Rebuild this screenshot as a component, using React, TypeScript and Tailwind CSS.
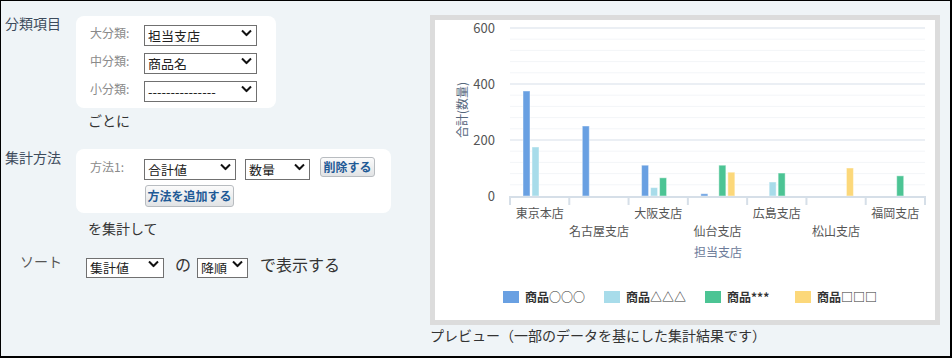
import React from 'react'

const font = "font-['Noto_Sans_CJK_JP','Noto_Sans',sans-serif]"

function Select({ value, width, height = 21 }: { value: string; width: number; height?: number }) {
  return (
    <div className="relative" style={{ width, height }}>
      <select
        defaultValue={value}
        className={`${font} h-full w-full appearance-none rounded-none border border-[#707070] bg-white pl-[3px] text-[13px] leading-none text-[#222] outline-none`}
      >
        <option>{value}</option>
      </select>
      <svg
        className="pointer-events-none absolute right-[5px] top-1/2 -translate-y-1/2"
        width="11"
        height="7"
        viewBox="0 0 11 7"
      >
        <path d="M1 1 L5.5 5.5 L10 1" fill="none" stroke="#111" strokeWidth="2" />
      </svg>
    </div>
  )
}

function Button({ label, width, height }: { label: string; width: number; height: number }) {
  return (
    <button
      className={`${font} flex items-center justify-center rounded-[3px] border border-[#b8bcc0] bg-gradient-to-b from-[#fbfbfb] to-[#e1e3e5] text-[12px] font-bold text-[#1f5a96]`}
      style={{ width, height }}
    >
      {label}
    </button>
  )
}

const cats = ['東京本店', '名古屋支店', '大阪支店', '仙台支店', '広島支店', '松山支店', '福岡支店']
const data = [
  [375, 175, 0, 0],
  [250, 0, 0, 0],
  [110, 30, 65, 0],
  [8, 0, 110, 85],
  [0, 50, 82, 0],
  [0, 0, 0, 100],
  [0, 0, 72, 0],
]
const colors = ['#69a0e2', '#a8dcea', '#4cc494', '#fcd87a']
const legend = ['商品○○○', '商品△△△', '商品***', '商品□□□']
const legendX = [68, 169, 270, 360]

function Chart() {
  const x0 = 75
  const x1 = 490
  const y0 = 176
  const step = (x1 - x0) / 7
  const yv = (v: number) => y0 - v * 0.28
  const grid: number[] = []
  for (let v = 40; v <= 600; v += 40) grid.push(v)

  return (
    <svg width="500" height="300" viewBox="0 0 500 300" className={font}>
      {grid.map((v) => (
        <line
          key={v}
          x1={x0}
          x2={x1}
          y1={yv(v)}
          y2={yv(v)}
          stroke={v % 200 === 0 ? '#e4eaf1' : '#f3f5f8'}
          strokeWidth={v % 200 === 0 ? 1.5 : 1}
        />
      ))}
      {[0, 200, 400, 600].map((v) => (
        <text key={v} x={60} y={yv(v) + 5} textAnchor="end" fontSize="13" fill="#555">
          {v}
        </text>
      ))}
      <text
        transform="translate(32 90) rotate(-90)"
        textAnchor="middle"
        fontSize="12"
        fill="#55667c"
      >
        合計(数量)
      </text>
      {data.map((vals, i) =>
        vals.map((v, j) =>
          v > 0 ? (
            <rect
              key={`${i}-${j}`}
              x={x0 + i * step + 13 + j * 9}
              y={yv(v)}
              width={7}
              height={v * 0.28}
              fill={colors[j]}
              stroke="rgba(255,255,255,0.45)"
              strokeWidth={1}
            />
          ) : null,
        ),
      )}
      <line x1={x0} x2={x1 + 1} y1={y0 + 1} y2={y0 + 1} stroke="#d6dfe8" strokeWidth="2" />
      {Array.from({ length: 8 }).map((_, i) => (
        <line
          key={i}
          x1={x0 + i * step}
          x2={x0 + i * step}
          y1={y0}
          y2={y0 + 9}
          stroke="#d6dfe8"
          strokeWidth="2"
        />
      ))}
      {cats.map((c, i) => (
        <text
          key={c}
          x={x0 + (i + 0.5) * step}
          y={i % 2 === 0 ? 198 : 216}
          textAnchor="middle"
          fontSize="12"
          fill="#555"
        >
          {c}
        </text>
      ))}
      <text x={283} y={237} textAnchor="middle" fontSize="12" fill="#6b7a99">
        担当支店
      </text>
      {legend.map((l, i) => (
        <g key={l}>
          <rect x={legendX[i]} y={271} width={16} height={12} fill={colors[i]} />
          <text x={legendX[i] + 22} y={282} fontSize="12" fontWeight="bold" fill="#333">
            {l}
          </text>
        </g>
      ))}
    </svg>
  )
}

export default function App() {
  return (
    <div
      className={`${font} flex h-[358px] w-[952px] border-t border-l border-r-2 border-b-2 border-black bg-[#eff4f7] text-[#333]`}
    >
      {/* left: settings */}
      <div className="w-[429px] pl-[4px] pt-[12px]">
        <div className="flex items-start">
          <div className="w-[71px] text-[14px] leading-[20px] text-[#3d4b5c]">分類項目</div>
          <div className="mt-[3px] flex w-[200px] flex-col gap-[7px] rounded-[8px] bg-white pb-[9px] pl-[14px] pt-[6px]">
            {[
              ['大分類:', '担当支店'],
              ['中分類:', '商品名'],
              ['小分類:', '---------------'],
            ].map(([label, value]) => (
              <div key={label} className="flex h-[21px] items-center">
                <div className="w-[54px] text-[12px] text-[#8a8a8a]">{label}</div>
                <Select value={value} width={113} />
              </div>
            ))}
          </div>
        </div>
        <div className="ml-[83px] mt-[2px] text-[14px] leading-[20px]">ごとに</div>

        <div className="mt-[17px] flex items-start">
          <div className="w-[71px] text-[14px] leading-[20px] text-[#3d4b5c]">集計方法</div>
          <div className="mt-[2px] w-[315px] rounded-[8px] bg-white pb-[6px] pl-[14px] pt-[7px]">
            <div className="flex h-[21px] items-center">
              <div className="w-[54px] text-[12px] text-[#8a8a8a]">方法1:</div>
              <Select value="合計値" width={92} />
              <div className="ml-[9px]">
                <Select value="数量" width={65} />
              </div>
              <div className="ml-[10px]">
                <Button label="削除する" width={55} height={20} />
              </div>
            </div>
            <div className="ml-[55px] mt-[8px]">
              <Button label="方法を追加する" width={89} height={22} />
            </div>
          </div>
        </div>
        <div className="ml-[83px] mt-[5px] text-[14px] leading-[20px]">を集計して</div>

        <div className="mt-[16px] flex h-[20px] items-center">
          <div className="ml-[15px] w-[66px] self-start text-[14px] leading-[14px] text-[#555]">ソート</div>
          <Select value="集計値" width={78} height={20} />
          <div className="ml-[11px] text-[16px] leading-[20px]">の</div>
          <div className="ml-[6px]">
            <Select value="降順" width={51} height={20} />
          </div>
          <div className="ml-[12px] text-[16px] leading-[20px]">で表示する</div>
        </div>
      </div>

      {/* right: preview chart */}
      <div className="pt-[14px]">
        <div className="h-[310px] w-[510px] border-[5px] border-[#dcdcdc] bg-white">
          <Chart />
        </div>
        <div className="text-[14px] leading-[20px] text-[#333]">
          プレビュー（一部のデータを基にした集計結果です）
        </div>
      </div>
    </div>
  )
}
